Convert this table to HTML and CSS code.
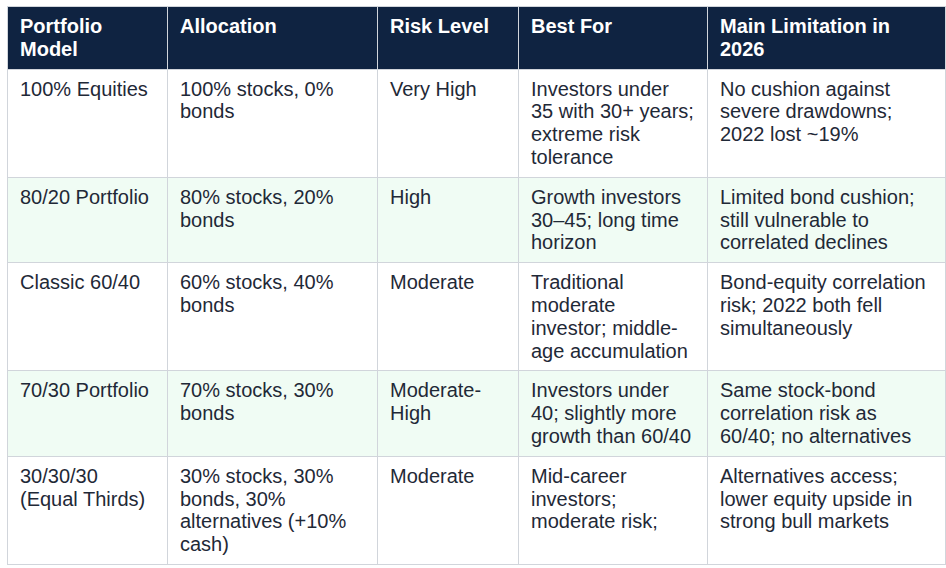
FILE: index.html
```html
<!DOCTYPE html>
<html>
<head>
<meta charset="utf-8">
<link rel="stylesheet" href="styles.css">
</head>
<body>
<table class="models">
  <colgroup>
    <col class="c1"><col class="c2"><col class="c3"><col class="c4"><col class="c5">
  </colgroup>
  <thead>
    <tr>
      <th>Portfolio Model</th>
      <th>Allocation</th>
      <th>Risk Level</th>
      <th>Best For</th>
      <th>Main Limitation in 2026</th>
    </tr>
  </thead>
  <tbody>
    <tr>
      <td>100% Equities</td>
      <td>100% stocks, 0% bonds</td>
      <td>Very High</td>
      <td>Investors under 35 with 30+ years; extreme risk tolerance</td>
      <td>No cushion against severe drawdowns; 2022 lost ~19%</td>
    </tr>
    <tr class="alt">
      <td>80/20 Portfolio</td>
      <td>80% stocks, 20% bonds</td>
      <td>High</td>
      <td>Growth investors 30–45; long time horizon</td>
      <td>Limited bond cushion; still vulnerable to correlated declines</td>
    </tr>
    <tr>
      <td>Classic 60/40</td>
      <td>60% stocks, 40% bonds</td>
      <td>Moderate</td>
      <td>Traditional moderate investor; middle-age accumulation</td>
      <td>Bond-equity correlation risk; 2022 both fell simultaneously</td>
    </tr>
    <tr class="alt">
      <td>70/30 Portfolio</td>
      <td>70% stocks, 30% bonds</td>
      <td>Moderate-High</td>
      <td>Investors under 40; slightly more growth than 60/40</td>
      <td>Same stock-bond correlation risk as 60/40; no alternatives</td>
    </tr>
    <tr>
      <td>30/30/30 (Equal Thirds)</td>
      <td>30% stocks, 30% bonds, 30% alternatives (+10% cash)</td>
      <td>Moderate</td>
      <td>Mid-career investors; moderate risk;</td>
      <td>Alternatives access; lower equity upside in strong bull markets</td>
    </tr>
  </tbody>
</table>
</body>
</html>
```

FILE: styles.css
```css
html, body {
  background: #ffffff;
}
body {
  margin: 6px 0 0 7px;
  font-family: "Liberation Sans", Arial, sans-serif;
}
.models {
  border-collapse: collapse;
  table-layout: fixed;
  width: 938px;
  font-size: 20px;
  line-height: 22.8px;
  color: #1f2937;
}
.c1 { width: 160px; }
.c2 { width: 210px; }
.c3 { width: 141px; }
.c4 { width: 189px; }
.c5 { width: 238px; }
.models th,
.models td {
  border: 1px solid #d1d5db;
  padding: 8px 12px;
  text-align: left;
  vertical-align: top;
}
.models th {
  background: #0f2341;
  color: #ffffff;
  font-weight: bold;
}
.models tr.alt td {
  background: #f0fcf4;
}
```
